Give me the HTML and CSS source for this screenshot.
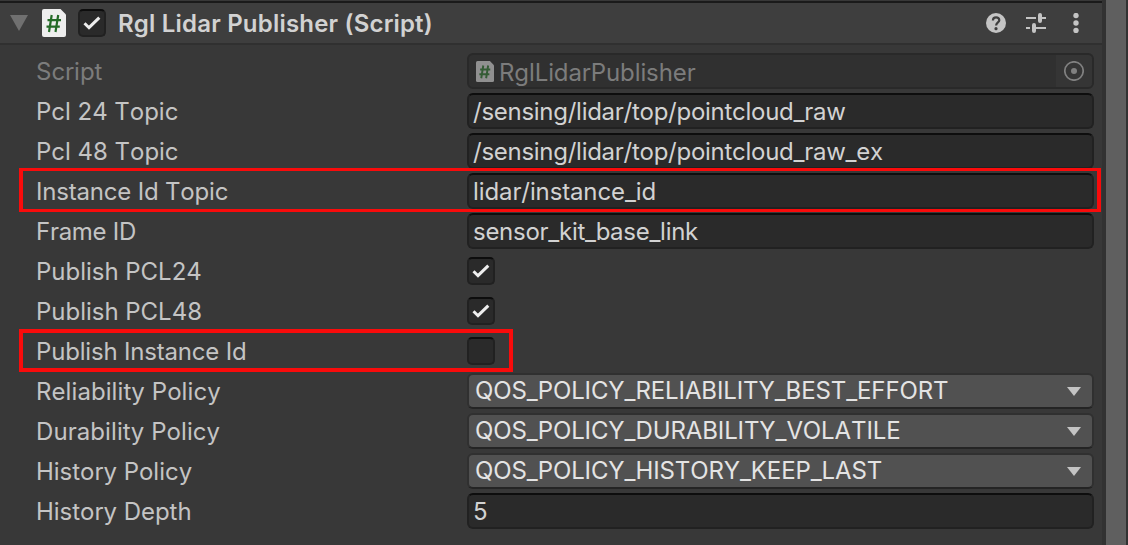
FILE: index.html
```html
<!DOCTYPE html>
<html lang="en">
<head>
<meta charset="utf-8">
<title>Inspector</title>
<link rel="stylesheet" href="styles.css">
</head>
<body>
<div class="window">
  <main class="panel">
    <header class="header">
      <svg class="fold" width="18" height="16" viewBox="0 0 18 16"><path d="M0 0H18L9 16Z" fill="#707070"/></svg>
      <svg class="script-icon" width="24" height="28" viewBox="0 0 24 28"><path d="M2 0H18.500L24 5.500V26a2 2 0 0 1-2 2H2a2 2 0 0 1-2-2V2a2 2 0 0 1 2-2Z" fill="#eee"/><path d="M9.700 6L7 23M16.200 6L13.500 23M5.500 11.200H19M4.500 17.700H17.800" stroke="#246b27" stroke-width="2.200" fill="none"/></svg>
      <span class="check"><svg width="18" height="14" viewBox="0 0 18 14"><path d="M1.500 7.300L6 11.700L16.300 1.700" /></svg></span>
      <h1 class="title">Rgl Lidar Publisher (Script)</h1>
      <div class="tools">
        <svg width="20" height="20" viewBox="0 0 20 20"><circle cx="10" cy="10" r="10" fill="#c4c4c4"/><path d="M6.900 7.600C6.900 5.400 8.200 4.300 10.100 4.300S13.300 5.500 13.300 7.200C13.300 9.500 10.100 9.300 10.100 12.600" fill="none" stroke="#3e3e3e" stroke-width="2.200"/><circle cx="10" cy="15.700" r="1.600" fill="#3e3e3e"/></svg>
        <svg width="20" height="20" viewBox="0 0 20 20"><path d="M0 5H10M16 5H20M0 15H4M10 15H20" stroke="#c4c4c4" stroke-width="2"/><path d="M14 2V8M8 12V18" stroke="#c4c4c4" stroke-width="4" stroke-linecap="round"/></svg>
        <svg width="20" height="20" viewBox="0 0 20 20" fill="#c4c4c4"><circle cx="10" cy="2.500" r="2.700"/><circle cx="10" cy="10" r="2.700"/><circle cx="10" cy="17.500" r="2.700"/></svg>
      </div>
    </header>
    <div class="rows">
      <div class="row disabled"><span class="label">Script</span><div class="field object">
        <svg class="mini" width="18" height="21" viewBox="0 0 24 28"><path d="M2 0H18.500L24 5.500V26a2 2 0 0 1-2 2H2a2 2 0 0 1-2-2V2a2 2 0 0 1 2-2Z" fill="#909090"/><path d="M9.700 6L7 23M16.200 6L13.500 23M5.500 11.200H19M4.500 17.700H17.800" stroke="#345c35" stroke-width="2.600" fill="none"/></svg>
        <span class="value">RglLidarPublisher</span>
        <span class="picker"><svg width="20" height="20" viewBox="0 0 20 20"><circle cx="10" cy="10" r="9.200" fill="none" stroke="#808080" stroke-width="1.700"/><circle cx="10" cy="10" r="3" fill="#808080"/></svg></span>
      </div></div>
      <div class="row"><span class="label">Pcl 24 Topic</span><div class="field"><span class="value tight">/sensing/lidar/top/pointcloud_raw</span></div></div>
      <div class="row"><span class="label">Pcl 48 Topic</span><div class="field"><span class="value tight">/sensing/lidar/top/pointcloud_raw_ex</span></div></div>
      <div class="row"><span class="label snug">Instance Id Topic</span><div class="field"><span class="value">lidar/instance_id</span></div><i class="mark mark-wide"></i></div>
      <div class="row"><span class="label tight">Frame ID</span><div class="field"><span class="value tight">sensor_kit_base_link</span></div></div>
      <div class="row"><span class="label">Publish PCL24</span><span class="check"><svg width="18" height="14" viewBox="0 0 18 14"><path d="M1.500 7.300L6 11.700L16.300 1.700" /></svg></span></div>
      <div class="row"><span class="label">Publish PCL48</span><span class="check"><svg width="18" height="14" viewBox="0 0 18 14"><path d="M1.500 7.300L6 11.700L16.300 1.700" /></svg></span></div>
      <div class="row"><span class="label snug">Publish Instance Id</span><span class="check"></span><i class="mark mark-short"></i></div>
      <div class="row"><span class="label loose">Reliability Policy</span><div class="popup"><span class="value">QOS_POLICY_RELIABILITY_BEST_EFFORT</span><svg width="14" height="9" viewBox="0 0 14 9"><path d="M0 0H14L7 9Z" fill="#c4c4c4"/></svg></div></div>
      <div class="row"><span class="label loose">Durability Policy</span><div class="popup"><span class="value">QOS_POLICY_DURABILITY_VOLATILE</span><svg width="14" height="9" viewBox="0 0 14 9"><path d="M0 0H14L7 9Z" fill="#c4c4c4"/></svg></div></div>
      <div class="row"><span class="label">History Policy</span><div class="popup"><span class="value">QOS_POLICY_HISTORY_KEEP_LAST</span><svg width="14" height="9" viewBox="0 0 14 9"><path d="M0 0H14L7 9Z" fill="#c4c4c4"/></svg></div></div>
      <div class="row"><span class="label">History Depth</span><div class="field"><span class="value">5</span></div></div>
    </div>
  </main>
  <div class="scrollbar"></div>
</div>
</body>
</html>
```
FILE: styles.css
```css
* { box-sizing: border-box; }
body { margin: 0; background: #383838; font-family: Inter, "Liberation Sans", sans-serif; font-size: 24px; font-kerning: none; color: #c4c4c4; overflow: hidden; }
svg { display: block; flex: none; }
.window { display: flex; height: 545px; }
.panel { width: 1102px; }
.header { height: 45px; display: flex; align-items: center; padding-left: 10px; background: #3e3e3e; border-top: 1px solid #383838; border-bottom: 2px solid #303030; box-shadow: inset 0 2px #1a1a1a; padding-top: 2px; }
.script-icon { margin: 0 12px 0 14px; }
.title { margin: 1px 0 0 12px; font-size: 24px; font-weight: 600; line-height: 30px; letter-spacing: 0.2px; color: #d2d2d2; white-space: nowrap; }
.tools { display: flex; gap: 20px; margin-left: auto; padding-right: 16px; }
.check { width: 28px; height: 28px; flex: none; display: flex; align-items: center; justify-content: center; background: #2a2a2a; border: 2px solid #212121; border-top-color: #0d0d0d; border-radius: 5px; }
.check path { fill: none; stroke: #eee; stroke-width: 3; }
.rows { display: grid; grid-auto-rows: 36px; gap: 4px; padding: 8px 8px 0 36px; }
.row { display: flex; align-items: center; position: relative; }
.label { width: 431px; line-height: 32px; padding-top: 2px; letter-spacing: -0.02px; white-space: nowrap; }
.value { line-height: 32px; letter-spacing: -0.1px; white-space: nowrap; }
.label.snug { letter-spacing: -0.18px; }
.label.loose { letter-spacing: 0.08px; }
.tight { letter-spacing: -0.27px; }
.field { width: 627px; height: 36px; display: flex; align-items: center; padding: 2px 0 0 4px; background: #2a2a2a; border: 2px solid #212121; border-top-color: #0d0d0d; border-radius: 6px; color: #d2d2d2; }
.disabled .label, .disabled .value { color: #7c7c7c; }
.field.object { background: #303030; border-color: #292929; padding: 0 0 0 7px; }
.object .value { margin-left: 5px; padding-top: 4px; }
.picker { margin-left: auto; width: 36px; height: 32px; display: flex; align-items: center; justify-content: center; background: #353535; border-radius: 0 4px 4px 0; }
.popup { width: 627px; height: 36px; display: flex; align-items: center; justify-content: space-between; padding: 0 11px 0 6px; background: #515151; border: 2px solid #303030; border-bottom-color: #242424; border-radius: 6px; color: #e4e4e4; }
.mark { position: absolute; left: -17px; top: -4px; border: 4px solid #f90b0b; pointer-events: none; }
.mark-wide { width: 1082px; top: -5px; height: 44px; border-top-width: 3px; border-bottom-width: 3px; }
.mark-short { width: 494px; height: 43px; }
.scrollbar { width: 26px; background: #5f5f5f; border-left: 4px solid #323232; border-right: 2px solid #323232; }
```
